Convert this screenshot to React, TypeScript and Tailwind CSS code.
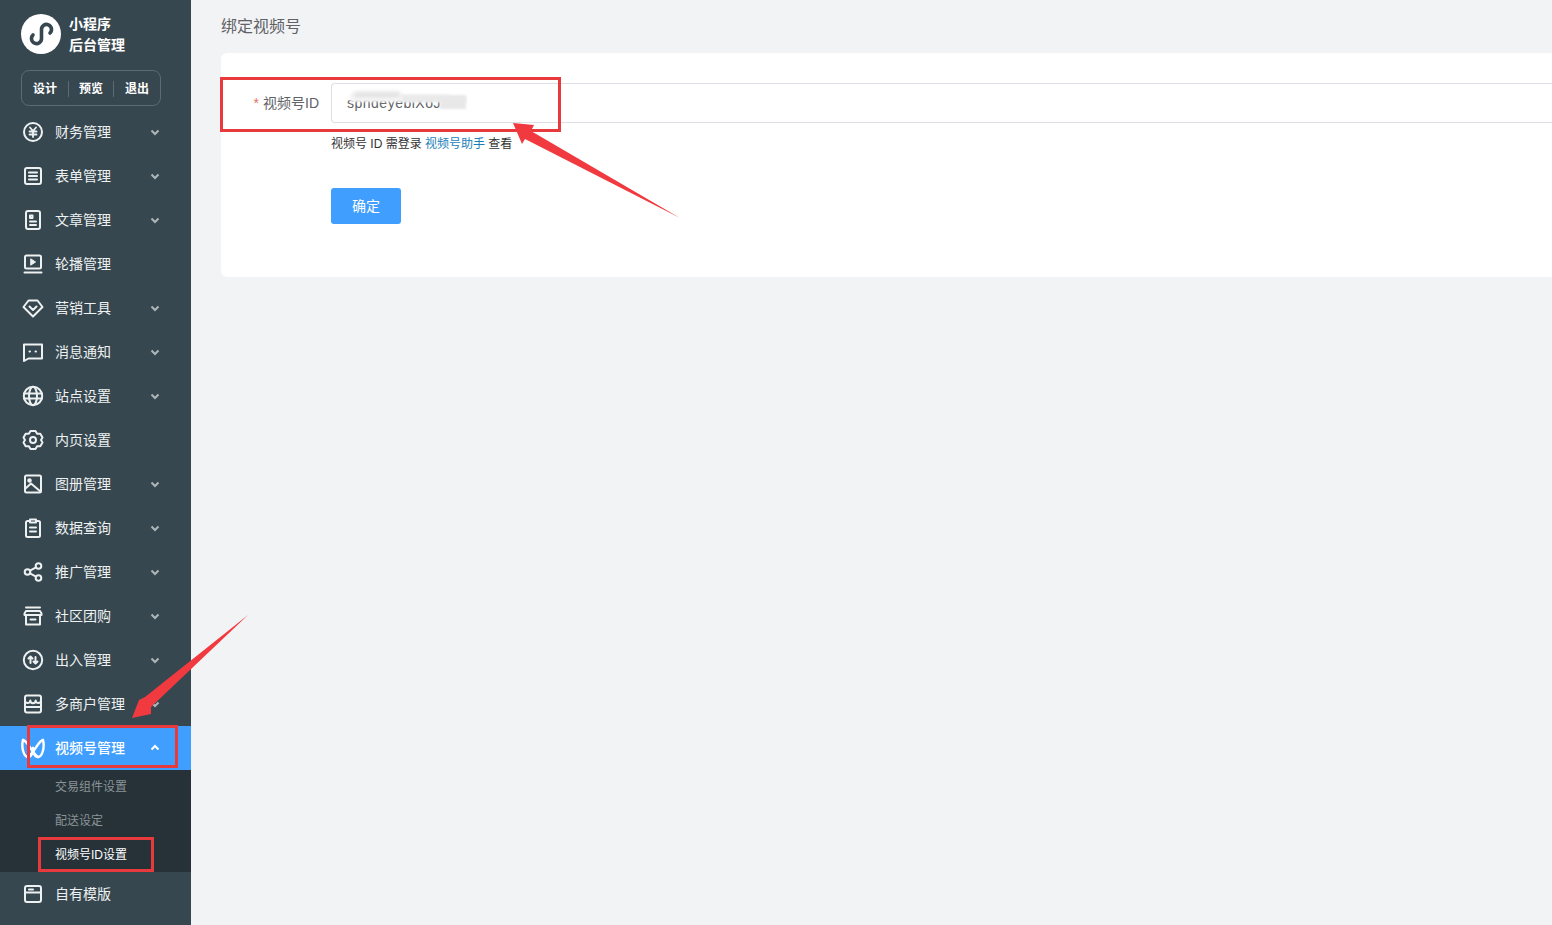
import type { ReactNode } from 'react';

interface MenuItem {
  label: string;
  icon: ReactNode;
  arrow?: boolean;
}

const Ico = ({ children }: { children: ReactNode }) => (
  <svg width="22" height="22" viewBox="0 0 22 22" fill="none" stroke="currentColor" strokeWidth="2" strokeLinecap="round" strokeLinejoin="round">
    {children}
  </svg>
);

const MENU: MenuItem[] = [
  {
    label: '财务管理',
    arrow: true,
    icon: (
      <Ico>
        <circle cx="11" cy="11" r="9" />
        <path d="M8 6.500l3 3.500 3-3.500M7.500 10.500h7M7.500 13.500h7M11 10v6" strokeWidth="1.800" />
      </Ico>
    ),
  },
  {
    label: '表单管理',
    arrow: true,
    icon: (
      <Ico>
        <rect x="3" y="3" width="16" height="16" rx="2" />
        <path d="M7 7.500h8M7 11h8M7 14.500h8" />
      </Ico>
    ),
  },
  {
    label: '文章管理',
    arrow: true,
    icon: (
      <Ico>
        <rect x="4" y="2" width="14" height="18" rx="2" />
        <path d="M8 6.500h2.500v2.500H8zM8 12.500h6M8 16h6" />
      </Ico>
    ),
  },
  {
    label: '轮播管理',
    icon: (
      <Ico>
        <rect x="3" y="2.500" width="16" height="13" rx="1.500" />
        <path d="M9 6l4.500 3L9 12z" fill="currentColor" strokeWidth="1" />
        <path d="M2.500 19.500h17" />
      </Ico>
    ),
  },
  {
    label: '营销工具',
    arrow: true,
    icon: (
      <Ico>
        <path d="M6.500 3.500h9L20.500 10 11 19.500 1.500 10z" />
        <path d="M7.500 9.500L11 13l3.500-3.500" />
      </Ico>
    ),
  },
  {
    label: '消息通知',
    arrow: true,
    icon: (
      <Ico>
        <path d="M2 3.500h18v14H6.500L2 20z" />
        <path d="M7.500 10.500h.5M13.500 10.500h.5" />
      </Ico>
    ),
  },
  {
    label: '站点设置',
    arrow: true,
    icon: (
      <Ico>
        <circle cx="11" cy="11" r="9.200" />
        <ellipse cx="11" cy="11" rx="4" ry="9.200" />
        <path d="M2 8.500h18M2 13.500h18" />
      </Ico>
    ),
  },
  {
    label: '内页设置',
    icon: (
      <Ico>
        <path d="M8.500 2h5l1.600 2.700 3.200.1 2.200 3.700-1.500 2.500 1.500 2.500-2.200 3.700-3.200.1-1.600 2.700h-5l-1.600-2.700-3.200-.1-2.200-3.700L3 11 1.500 8.500l2.200-3.700 3.200-.1z" />
        <circle cx="11" cy="11" r="3" />
      </Ico>
    ),
  },
  {
    label: '图册管理',
    arrow: true,
    icon: (
      <Ico>
        <rect x="3" y="2.500" width="16" height="17" rx="1.500" />
        <circle cx="7.500" cy="7.500" r="1.300" fill="currentColor" />
        <path d="M3.500 15.500L9 10.500l9.500 8" />
      </Ico>
    ),
  },
  {
    label: '数据查询',
    arrow: true,
    icon: (
      <Ico>
        <path d="M8 4H5.500a1.500 1.500 0 0 0-1.500 1.500v13A1.500 1.500 0 0 0 5.500 20h11a1.500 1.500 0 0 0 1.500-1.500v-13A1.500 1.500 0 0 0 16.500 4H14" />
        <path d="M8 2.500h6v3H8zM8 10.500h6M8 14.500h6" />
      </Ico>
    ),
  },
  {
    label: '推广管理',
    arrow: true,
    icon: (
      <Ico>
        <circle cx="5.500" cy="11" r="2.800" />
        <circle cx="16.500" cy="5" r="2.800" />
        <circle cx="16.500" cy="17" r="2.800" />
        <path d="M8 9.600l6-3.200M8 12.400l6 3.200" />
      </Ico>
    ),
  },
  {
    label: '社区团购',
    arrow: true,
    icon: (
      <Ico>
        <path d="M4 2.500h14M2.500 10V8.500l1.500-2.500h14l1.500 2.500V10zM4 10v9.500h14V10M8.500 14.500h5" />
      </Ico>
    ),
  },
  {
    label: '出入管理',
    arrow: true,
    icon: (
      <Ico>
        <circle cx="11" cy="11" r="9.200" />
        <path d="M8.500 14V7.500M6.500 9.500l2-2 2 2M13.500 8v6.500M11.500 12.500l2 2 2-2" />
      </Ico>
    ),
  },
  {
    label: '多商户管理',
    arrow: true,
    icon: (
      <Ico>
        <rect x="3" y="2.500" width="16" height="17" rx="2" />
        <path d="M3 7.500a2.670 2.670 0 0 0 5.330 0 2.670 2.670 0 0 0 5.340 0 2.670 2.670 0 0 0 5.330 0M3 14h16" />
      </Ico>
    ),
  },
];

export default function App() {
  return (
    <div className="relative flex h-[925px] overflow-hidden bg-[#f2f3f5] font-['Liberation_Sans','Noto_Sans_CJK_SC',sans-serif]">
      {/* Sidebar */}
      <aside className="flex w-[191px] shrink-0 flex-col bg-[#37474f] text-white">
        <div className="flex h-[70px] items-start gap-2 pl-[21px] pt-[14px]">
          <div className="flex h-10 w-10 items-center justify-center rounded-full bg-white">
            <svg width="26" height="26" viewBox="0 0 26 26" fill="none" stroke="#37474f" strokeWidth="3.600" strokeLinecap="round">
              <path d="M5 14a5 5 0 1 0 8.500 3.500v-9a5 5 0 1 1 8.500 3.500" />
            </svg>
          </div>
          <div className="text-sm font-bold leading-[21px]">
            <div>小程序</div>
            <div>后台管理</div>
          </div>
        </div>
        <div className="mx-[21px] flex h-9 w-[140px] items-center justify-between rounded-lg border border-[#5a6b74] px-[11px] pt-px text-xs font-bold">
          <span>设计</span>
          <span className="h-4 w-px bg-[#5a6b74]" />
          <span>预览</span>
          <span className="h-4 w-px bg-[#5a6b74]" />
          <span>退出</span>
        </div>
        <nav className="mt-[4px] flex flex-col">
          {MENU.map((item) => (
            <div key={item.label} className="flex h-11 items-center pl-[22px] pr-[30px] text-[14px] text-[#eef1f2]">
              <span className="w-[33px]">{item.icon}</span>
              <span className="flex-1 whitespace-nowrap">{item.label}</span>
              {item.arrow && (
                <svg width="12" height="12" viewBox="0 0 12 12" fill="none" stroke="#aeb6ba" strokeWidth="2">
                  <path d="M2.500 4.500L6 8l3.500-3.500" />
                </svg>
              )}
            </div>
          ))}
          <div className="flex h-11 items-center bg-[#409eff] pl-[21px] pr-[30px] text-[14px] font-medium text-white">
            <span className="w-[34px]">
              <svg width="24" height="22" viewBox="0 0 24 22" fill="none" stroke="currentColor" strokeWidth="2.400" strokeLinecap="round">
                <path d="M2 3C0 11 3 20 7 20c3 0 5-4 5-9" />
                <path d="M22 3c2 8-1 17-5 17-3 0-5-4-5-9" />
                <path d="M2 3c5 1 8 12 15 17" />
                <path d="M22 3c-5 1-8 12-15 17" />
              </svg>
            </span>
            <span className="flex-1 whitespace-nowrap">视频号管理</span>
            <svg width="12" height="12" viewBox="0 0 12 12" fill="none" stroke="#ffffff" strokeWidth="2">
              <path d="M2.500 7.500L6 4l3.500 3.500" />
            </svg>
          </div>
          <div className="flex flex-col bg-[#263238] pl-[55px] text-xs text-[#8b9397]">
            <div className="flex h-[34px] items-center">交易组件设置</div>
            <div className="flex h-[34px] items-center">配送设定</div>
            <div className="flex h-[34px] items-center text-white">视频号ID设置</div>
          </div>
          <div className="flex h-11 items-center pl-[22px] text-[14px] text-[#eef1f2]">
            <span className="w-[33px]">
              <Ico>
                <rect x="3" y="3" width="16" height="16" rx="2" />
                <path d="M3 9.500h16M7 6.500h4" />
              </Ico>
            </span>
            <span>自有模版</span>
          </div>
        </nav>
      </aside>

      {/* Content */}
      <main className="flex-1 pl-[30px]">
        <h1 className="flex h-[53px] items-center text-base font-normal text-[#606266]">绑定视频号</h1>
        <section className="h-[224px] rounded-l-md bg-white pt-[30px]">
          <div className="flex items-center">
            <label className="w-[98px] whitespace-nowrap text-right text-[14px] leading-10 text-[#606266]">
              <span className="mr-1 text-[#e2755f]">*</span>视频号ID
            </label>
            <div className="relative ml-3 h-10 flex-1 rounded-l border border-r-0 border-[#dcdfe6] pl-[15px] text-[14px] leading-[38px] tracking-[0.5px] text-[#606266]">
              sphdeyebiXoJ
              <div className="absolute left-[18px] top-[10px] h-[8px] w-[100px] bg-[#f6f6f6] blur-[1px]" />
              <div className="absolute left-[22px] top-[8px] h-[5px] w-[46px] bg-[#dfdfdf] blur-[2px]" />
              <div className="absolute left-[70px] top-[11px] h-[7px] w-[64px] bg-[#eaeaea] blur-[1px]" />
              <div className="absolute left-[108px] top-[13px] h-[12px] w-[26px] bg-[#e8e8e8] blur-[1px]" />
            </div>
          </div>
          <p className="ml-[110px] mt-[12px] text-xs leading-[18px] text-[#333333]">
            视频号 ID 需登录 <span className="text-[#1a7fb8]">视频号助手</span> 查看
          </p>
          <button className="ml-[110px] mt-[35px] block h-9 w-[70px] rounded-[3px] bg-[#409eff] text-sm text-white">确定</button>
        </section>
      </main>

      {/* Annotations */}
      <div className="absolute left-[220px] top-[77px] h-[55px] w-[341px] border-[3px] border-[#e83a3d]" />
      <div className="absolute left-[27px] top-[725px] h-[43px] w-[151px] border-[3px] border-[#e83a3d]" />
      <div className="absolute left-[38px] top-[837px] h-[35px] w-[116px] border-[3px] border-[#e83a3d]" />
      <svg className="pointer-events-none absolute left-0 top-0" width="1552" height="925" fill="#f03a3f">
        <polygon points="513,123 534,125 531,131 680,218 525,139 522,144" />
        <polygon points="248,615 145,697 139,700 132,718 151,714 151,707" />
      </svg>
    </div>
  );
}
